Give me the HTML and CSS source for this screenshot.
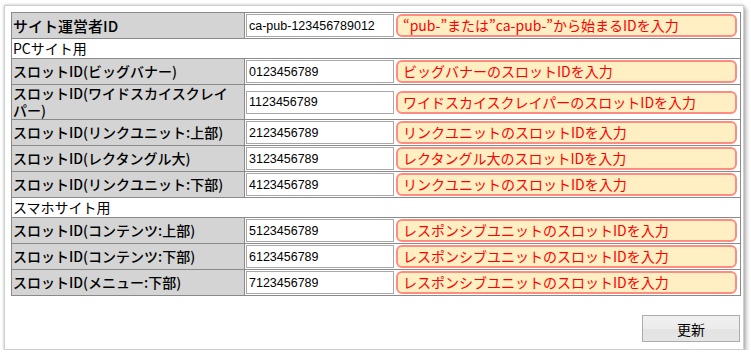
FILE: index.html
```html
<!DOCTYPE html>
<html lang="ja">
<head>
<meta charset="utf-8">
<link rel="stylesheet" href="styles.css">
</head>
<body>
<div class="panel">
  <div class="form">
    <div class="row">
      <div class="label label-main">サイト運営者ID</div>
      <div class="field"><input class="input" value="ca-pub-123456789012"><div class="hint">“pub-”または”ca-pub-”から始まるIDを入力</div></div>
    </div>
    <div class="section">PCサイト用</div>
    <div class="row">
      <div class="label">スロットID(ビッグバナー)</div>
      <div class="field"><input class="input" value="0123456789"><div class="hint">ビッグバナーのスロットIDを入力</div></div>
    </div>
    <div class="row">
      <div class="label">スロットID(ワイドスカイスクレイパー)</div>
      <div class="field"><input class="input" value="1123456789"><div class="hint">ワイドスカイスクレイパーのスロットIDを入力</div></div>
    </div>
    <div class="row">
      <div class="label">スロットID(リンクユニット:上部)</div>
      <div class="field"><input class="input" value="2123456789"><div class="hint">リンクユニットのスロットIDを入力</div></div>
    </div>
    <div class="row">
      <div class="label">スロットID(レクタングル大)</div>
      <div class="field"><input class="input" value="3123456789"><div class="hint">レクタングル大のスロットIDを入力</div></div>
    </div>
    <div class="row">
      <div class="label">スロットID(リンクユニット:下部)</div>
      <div class="field"><input class="input" value="4123456789"><div class="hint">リンクユニットのスロットIDを入力</div></div>
    </div>
    <div class="section">スマホサイト用</div>
    <div class="row">
      <div class="label">スロットID(コンテンツ:上部)</div>
      <div class="field"><input class="input" value="5123456789"><div class="hint">レスポンシブユニットのスロットIDを入力</div></div>
    </div>
    <div class="row">
      <div class="label">スロットID(コンテンツ:下部)</div>
      <div class="field"><input class="input" value="6123456789"><div class="hint">レスポンシブユニットのスロットIDを入力</div></div>
    </div>
    <div class="row row-last">
      <div class="label">スロットID(メニュー:下部)</div>
      <div class="field"><input class="input" value="7123456789"><div class="hint">レスポンシブユニットのスロットIDを入力</div></div>
    </div>
  </div>
  <div class="actions">
    <button class="btn">更新</button>
  </div>
</div>
</body>
</html>
```

FILE: styles.css
```css
html, body {
  margin: 0;
  padding: 0;
  background: #ffffff;
}
body {
  font-family: "Noto Sans CJK JP", "Noto Sans", sans-serif;
  font-size: 14px;
  color: #000;
}
.panel {
  box-sizing: border-box;
  margin: 5px 0 0 4px;
  width: 740px;
  height: 345px;
  background: #fff;
  border: 1px solid #cfcfcf;
  padding: 6px 0 0 6px;
  box-shadow: 0 0 3px rgba(0,0,0,0.25), 3px 3px 4px rgba(0,0,0,0.22);
}
.form {
  width: 730px;
  box-sizing: border-box;
  border: 1px solid #8a8a8a;
}
.row {
  display: grid;
  grid-template-columns: 233px 1fr;
  border-bottom: 1px solid #8a8a8a;
  min-height: 25px;
}
.row-last {
  border-bottom: none;
}
.label {
  box-sizing: border-box;
  background: #d4d4d4;
  border-right: 1px solid #8a8a8a;
  padding: 0 3px 0 1px;
  font-weight: 500;
  font-size: 14px;
  line-height: 17px;
  display: flex;
  align-items: center;
}
.label-main {
  font-size: 15px;
}
.section {
  height: 19px;
  line-height: 19px;
  padding-left: 1px;
  border-bottom: 1px solid #8a8a8a;
  font-size: 14px;
}
.field {
  display: flex;
  align-items: center;
  gap: 2px;
  padding: 1px 3px 1px 1px;
}
.input {
  box-sizing: border-box;
  width: 148px;
  height: 23px;
  margin: 0;
  border: 1px solid #a8a8a8;
  padding: 0 0 0 2px;
  font-family: "Liberation Sans", Arial, sans-serif;
  font-size: 12.5px;
  color: #000;
  background: #fff;
  outline: none;
}
.hint {
  flex: 1;
  box-sizing: border-box;
  height: 23px;
  border: 2px solid #ff8c80;
  border-radius: 6px;
  background: #ffefc2;
  color: #ff0000;
  font-size: 14px;
  line-height: 19px;
  padding-left: 5px;
  white-space: nowrap;
}
.actions {
  width: 730px;
  display: flex;
  justify-content: flex-end;
  padding-top: 19px;
}
.btn {
  box-sizing: border-box;
  width: 98px;
  height: 27px;
  margin-right: 1px;
  border: 1px solid #acacac;
  border-radius: 0;
  background: linear-gradient(#f0f0f0 0%, #ececec 50%, #e3e3e3 51%, #e5e5e5 100%);
  font-family: "Noto Sans CJK JP", sans-serif;
  font-size: 14px;
  color: #000;
  padding: 0;
}
```
